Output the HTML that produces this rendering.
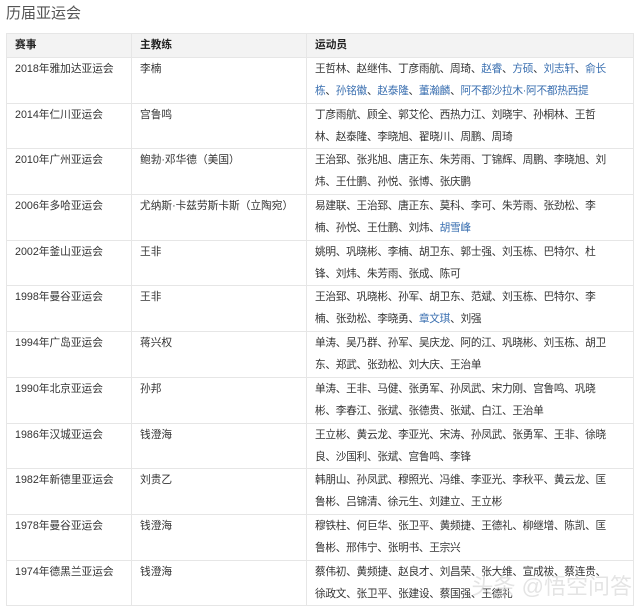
<!DOCTYPE html>
<html><head><meta charset="utf-8"><style>
body{margin:0;background:#fff;font-family:"Liberation Sans","Noto Sans CJK SC",sans-serif;color:#333;}
h1{position:absolute;left:6px;top:5px;margin:0;font-size:15px;line-height:18px;font-weight:normal;color:#555;}
table{position:absolute;left:6px;top:33px;border-collapse:collapse;width:628px;font-size:10.7px;}
td,th{border:1px solid #e6e6e6;vertical-align:top;text-align:left;padding:0 8px;line-height:22px;white-space:nowrap;}
td:nth-child(3){letter-spacing:-0.3px;}
th{background:#f3f3f3;height:23px;line-height:23px;font-weight:bold;color:#222;}
td{height:44.7px;padding-top:0;}
td.c1{width:108px;} td.c2{width:158px;}
a{color:#3a6fb0;text-decoration:none;}
.wm{position:absolute;right:8px;bottom:6px;font-size:22px;color:rgba(210,210,210,.6);}
</style></head><body>
<h1>历届亚运会</h1>
<table>
<tr><th>赛事</th><th>主教练</th><th>运动员</th></tr>
<tr><td class="c1">2018年雅加达亚运会</td><td class="c2">李楠</td><td>王哲林、赵继伟、丁彦雨航、周琦、<a>赵睿</a>、<a>方硕</a>、<a>刘志轩</a>、<a>俞长</a><br><a>栋</a>、<a>孙铭徽</a>、<a>赵泰隆</a>、<a>董瀚麟</a>、<a>阿不都沙拉木·阿不都热西提</a></td></tr>
<tr><td>2014年仁川亚运会</td><td>宫鲁鸣</td><td>丁彦雨航、顾全、郭艾伦、西热力江、刘晓宇、孙桐林、王哲<br>林、赵泰隆、李晓旭、翟晓川、周鹏、周琦</td></tr>
<tr><td>2010年广州亚运会</td><td>鲍勃·邓华德（美国）</td><td>王治郅、张兆旭、唐正东、朱芳雨、丁锦辉、周鹏、李晓旭、刘<br>炜、王仕鹏、孙悦、张博、张庆鹏</td></tr>
<tr><td>2006年多哈亚运会</td><td>尤纳斯·卡兹劳斯卡斯（立陶宛）</td><td>易建联、王治郅、唐正东、莫科、李可、朱芳雨、张劲松、李<br>楠、孙悦、王仕鹏、刘炜、<a>胡雪峰</a></td></tr>
<tr><td>2002年釜山亚运会</td><td>王非</td><td>姚明、巩晓彬、李楠、胡卫东、郭士强、刘玉栋、巴特尔、杜<br>锋、刘炜、朱芳雨、张成、陈可</td></tr>
<tr><td>1998年曼谷亚运会</td><td>王非</td><td>王治郅、巩晓彬、孙军、胡卫东、范斌、刘玉栋、巴特尔、李<br>楠、张劲松、李晓勇、<a>章文琪</a>、刘强</td></tr>
<tr><td>1994年广岛亚运会</td><td>蒋兴权</td><td>单涛、吴乃群、孙军、吴庆龙、阿的江、巩晓彬、刘玉栋、胡卫<br>东、郑武、张劲松、刘大庆、王治单</td></tr>
<tr><td>1990年北京亚运会</td><td>孙邦</td><td>单涛、王非、马健、张勇军、孙凤武、宋力刚、宫鲁鸣、巩晓<br>彬、李春江、张斌、张德贵、张斌、白江、王治单</td></tr>
<tr><td>1986年汉城亚运会</td><td>钱澄海</td><td>王立彬、黄云龙、李亚光、宋涛、孙凤武、张勇军、王非、徐晓<br>良、沙国利、张斌、宫鲁鸣、李锋</td></tr>
<tr><td>1982年新德里亚运会</td><td>刘贵乙</td><td>韩朋山、孙凤武、穆照光、冯维、李亚光、李秋平、黄云龙、匡<br>鲁彬、吕锦清、徐元生、刘建立、王立彬</td></tr>
<tr><td>1978年曼谷亚运会</td><td>钱澄海</td><td>穆铁柱、何巨华、张卫平、黄频捷、王德礼、柳继增、陈凯、匡<br>鲁彬、邢伟宁、张明书、王宗兴</td></tr>
<tr><td>1974年德黑兰亚运会</td><td>钱澄海</td><td>蔡伟初、黄频捷、赵良才、刘昌荣、张大维、宣成祓、蔡连贵、<br>徐政文、张卫平、张建设、蔡国强、王德礼</td></tr>
</table>
<div class="wm">头条 @悟空问答</div>
</body></html>
